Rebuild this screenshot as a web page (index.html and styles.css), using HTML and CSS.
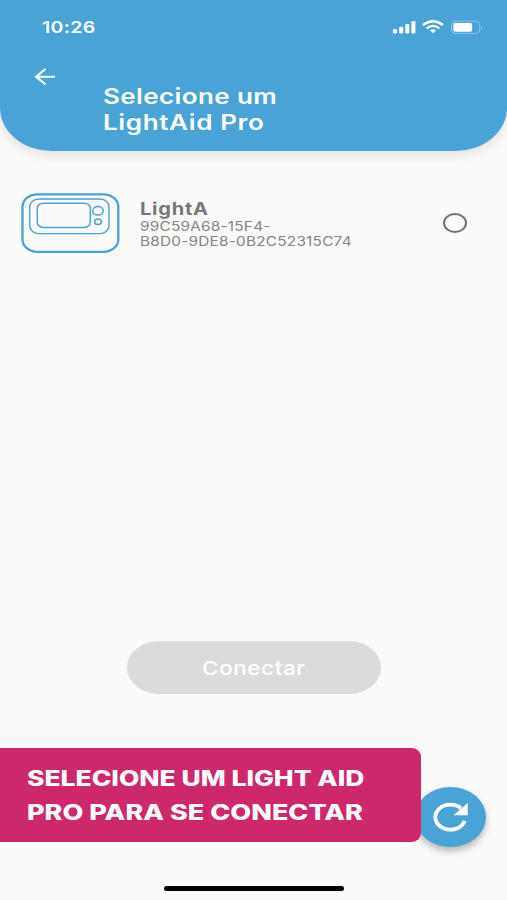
FILE: index.html
```html
<!DOCTYPE html>
<html lang="pt-BR">
  <head>
    <meta charset="utf-8">
    <title>LightAid Pro</title>
    <link rel="stylesheet" href="styles.css">
  </head>
  <body>

    <header class="header">
      <div class="status">
        <span class="time wide">10:26</span>
        <svg class="status-icons" width="92" height="16" viewBox="0 0 92 16">
          <g fill="#fff">
            <rect x="1" y="9" width="4" height="4.5" rx="1.2"/>
            <rect x="7.2" y="6.8" width="4" height="6.7" rx="1.2"/>
            <rect x="13.3" y="4" width="4" height="9.5" rx="1.2"/>
            <rect x="19.4" y="1" width="4" height="12.5" rx="1.2"/>
            <path d="M38 10.4Q41 8.2 44 10.4L41 13.3Z"/>
            <rect x="61.4" y="3" width="18.8" height="8.8" rx="1.8"/>
          </g>
          <g fill="none" stroke="#fff" stroke-width="2.3">
            <path d="M31 5Q41-2.6 51 5"/>
            <path d="M34.6 8.4Q41 3.4 47.4 8.4"/>
          </g>
          <rect x="59.6" y="1.2" width="28" height="12.2" rx="3.6" fill="none" stroke="#fff" stroke-opacity=".35"/>
          <path d="M89.2 5.3Q91.2 7.2 89.2 9.2Z" fill="#fff" fill-opacity=".5"/>
        </svg>
      </div>
      <div class="nav">
        <svg class="back" width="22" height="18" viewBox="0 0 22 18" fill="none" stroke="#fff" stroke-width="2.1">
          <path d="M21 8.7H2M11.5 1L2 8.7L11.5 16.4"/>
        </svg>
        <h1 class="title wide">Selecione um<br><span>LightAid Pro</span></h1>
      </div>
    </header>

    <main class="devices">
      <div class="device">
        <svg class="device-icon" width="99" height="61" viewBox="0 0 99 61" fill="none" stroke="#4aa3d6">
          <rect x="1.5" y="1.3" width="95.8" height="57.6" rx="15" ry="12.5" stroke-width="2.3"/>
          <rect x="8.7" y="6" width="79.3" height="34.6" rx="9" ry="8" stroke-width="1.4"/>
          <rect x="16.3" y="10.2" width="53" height="24.2" rx="6" ry="5" stroke-width="1.5"/>
          <ellipse cx="77" cy="17.8" rx="5.3" ry="4.3" stroke-width="1.5"/>
          <ellipse cx="77" cy="28.8" rx="3.4" ry="2.8" stroke-width="1.5"/>
        </svg>
        <div class="device-text">
          <div class="device-name wide">LightA</div>
          <div class="device-id wide">99C59A68-15F4-<br>B8D0-9DE8-0B2C52315C74</div>
        </div>
        <span class="radio"></span>
      </div>
    </main>

    <button class="connect"><span>Conectar</span></button>

    <footer class="footer">
      <div class="caption">
        <span class="caption-first">SELECIONE UM LIGHT AID</span>
        <span class="caption-second">PRO PARA SE CONECTAR</span>
      </div>
      <div class="refresh">
        <svg width="36" height="30" viewBox="0 0 36 30">
          <path d="M31.7 18.8A15 12.5 0 1 1 28 6.3" fill="none" stroke="#fff" stroke-width="3.8"/>
          <path d="M34.7 1V13.2H20.5Z" fill="#fff"/>
        </svg>
      </div>
    </footer>

    <div class="home-bar"></div>

  </body>
</html>
```

FILE: styles.css
```css
* { box-sizing: border-box; }

body {
    margin: 0;
    height: 900px;
    display: flex;
    flex-direction: column;
    background: #fafafa;
    font-family: Inter, "Liberation Sans", sans-serif;
    overflow: hidden;
}

/* the whole interface uses widened lettering */
.wide { transform: scaleX(1.18); transform-origin: left; white-space: nowrap; }

.header {
    flex: none;
    height: 151px;
    background: #4aa3d6;
    color: #fff;
    border-radius: 0 0 52px 52px / 0 0 43px 43px;
    box-shadow: 0 5px 10px rgba(60, 30, 30, 0.1);
}
.status {
    display: flex;
    justify-content: space-between;
    padding: 17px 23px 0 42px;
    height: 68px;
}
.time { font-size: 16.5px; line-height: 21px; font-weight: 600; height: 21px; letter-spacing: 0.3px; }
.status-icons { margin-top: 3px; }
.nav { display: flex; padding-left: 34px; }
.title { margin: 16px 0 0 46.5px; font-size: 21px; line-height: 25.5px; font-weight: 600; letter-spacing: 0.3px; transform: scaleX(1.24); }
.title span { letter-spacing: 0.5px; }

.devices { flex: none; height: 490px; padding: 42px 40px 0 21px; }
.device { display: flex; align-items: flex-start; }
.device-text { margin: 5px 0 0 20px; flex: 1; color: #777; }
.device-name { font-size: 17px; line-height: 22px; font-weight: 700; letter-spacing: 0.65px; }
.device-id { margin-top: -1px; font-size: 13px; line-height: 14.7px; color: #858585; letter-spacing: 0.2px; }
.radio {
    width: 24px;
    height: 20px;
    margin-top: 20px;
    border: 2px solid #707070;
    border-radius: 50%;
}

.connect {
    flex: none;
    align-self: center;
    width: 254px;
    height: 53px;
    padding: 1px 0 0 1px;
    border: none;
    border-radius: 32px / 26.5px;
    background: #dbdbdb;
    color: #fff;
    font: 500 19px Inter, "Liberation Sans", sans-serif;
    letter-spacing: 0.5px;
}
.connect span { display: inline-block; transform: scaleX(1.18); }

.footer { flex: none; display: flex; height: 138px; margin-top: 54px; }
.caption {
    position: relative;
    z-index: 1;
    width: 421px;
    height: 94px;
    padding: 13px 0 0 27px;
    background: #cc286b;
    border-radius: 0 9px 9px 0;
    color: #fff;
    font-size: 21.5px;
    line-height: 34px;
    font-weight: 800;
    white-space: nowrap;
}
.caption span { display: table; transform-origin: left; }
.caption-first { transform: scaleX(1.23); }
.caption-second { transform: scaleX(1.257); }
.refresh {
    display: flex;
    align-items: center;
    justify-content: center;
    width: 71px;
    height: 60px;
    margin: 39px 0 0 -6px;
    border-radius: 50%;
    background: #4aa3d6;
    box-shadow: 0 4px 7px rgba(0, 0, 0, 0.28);
}

.home-bar { flex: none; align-self: center; width: 180px; height: 5px; border-radius: 3px; background: #000; }
```
